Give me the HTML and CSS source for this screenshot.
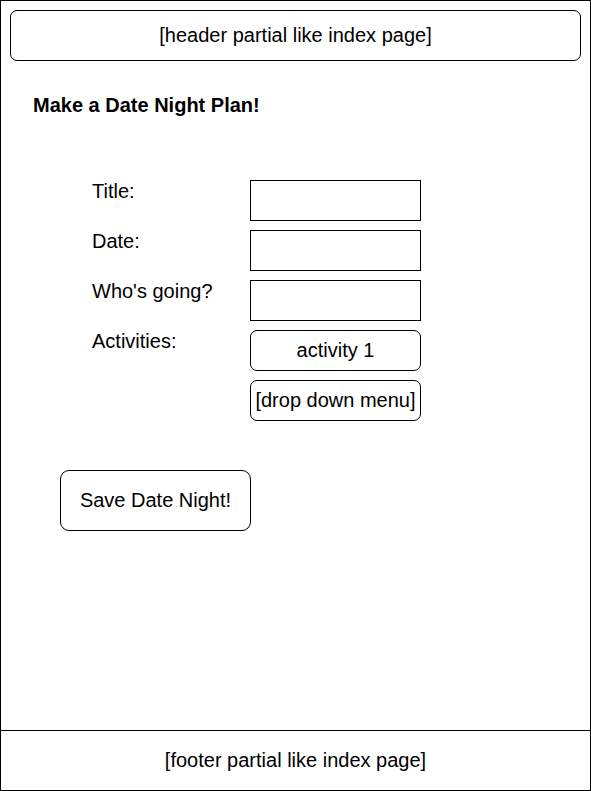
FILE: index.html
```html
<!DOCTYPE html>
<html lang="en">
<head>
<meta charset="utf-8">
<title>Make a Date Night Plan</title>
<link rel="stylesheet" href="styles.css">
</head>
<body>
<div class="frame">
  <header class="header">[header partial like index page]</header>
  <main class="main">
    <h1 class="page-title">Make a Date Night Plan!</h1>
    <form class="plan-form">
      <label class="field-label">Title:</label>
      <div class="text-box"></div>
      <label class="field-label">Date:</label>
      <div class="text-box"></div>
      <label class="field-label">Who's going?</label>
      <div class="text-box"></div>
      <label class="field-label">Activities:</label>
      <div class="pill">activity 1</div>
      <span class="field-label"></span>
      <div class="pill">[drop down menu]</div>
    </form>
    <div class="save-btn">Save Date Night!</div>
  </main>
  <footer class="footer">[footer partial like index page]</footer>
</div>
</body>
</html>
```
FILE: styles.css
```css
html, body {
  margin: 0;
  padding: 0;
  background: #fff;
}
body {
  font-family: "Liberation Sans", Arial, sans-serif;
  font-size: 20px;
  color: #000;
}
.frame {
  width: 591px;
  height: 791px;
  box-sizing: border-box;
  border: 1px solid #000;
  display: flex;
  flex-direction: column;
}
.header {
  margin: 9px 9px 0;
  height: 51px;
  box-sizing: border-box;
  border: 1px solid #000;
  border-radius: 7px;
  display: flex;
  align-items: center;
  justify-content: center;
  line-height: 23px;
}
.main {
  display: flex;
  flex-direction: column;
  align-items: flex-start;
}
.page-title {
  margin: 33px 0 0 32px;
  font-size: 20px;
  line-height: 23px;
  font-weight: bold;
}
.plan-form {
  margin: 63px 0 0 91px;
  display: grid;
  grid-template-columns: 158px 171px;
  grid-auto-rows: 41px;
  row-gap: 9px;
}
.field-label {
  line-height: 23px;
}
.text-box {
  box-sizing: border-box;
  border: 1px solid #000;
}
.pill {
  box-sizing: border-box;
  border: 1px solid #000;
  border-radius: 7px;
  display: flex;
  align-items: center;
  justify-content: center;
  white-space: nowrap;
  line-height: 23px;
}
.save-btn {
  margin: 49px 0 0 59px;
  width: 191px;
  height: 61px;
  box-sizing: border-box;
  border: 1px solid #000;
  border-radius: 9px;
  display: flex;
  align-items: center;
  justify-content: center;
  line-height: 23px;
}
.footer {
  margin-top: auto;
  height: 60px;
  box-sizing: border-box;
  border-top: 1px solid #000;
  display: flex;
  align-items: center;
  justify-content: center;
  line-height: 23px;
}
```
